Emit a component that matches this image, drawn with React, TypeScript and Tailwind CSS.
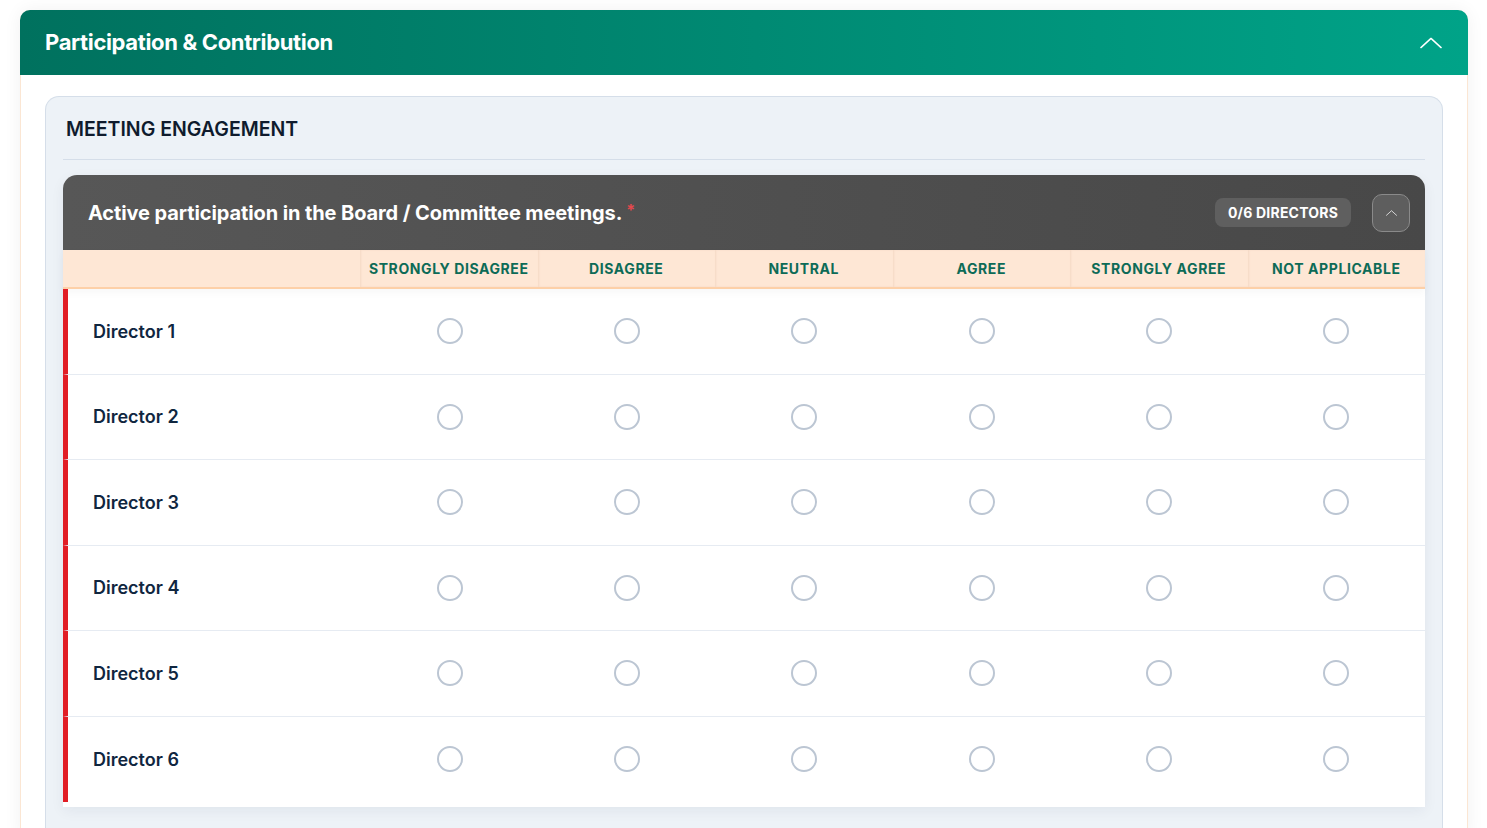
import React, { useState } from "react";

const OPTIONS = [
  "Strongly Disagree",
  "Disagree",
  "Neutral",
  "Agree",
  "Strongly Agree",
  "Not Applicable",
];

const DIRECTORS = [1, 2, 3, 4, 5, 6].map((n) => `Director ${n}`);

function ChevronUp({ className }: { className?: string }) {
  return (
    <svg viewBox="0 0 24 12" fill="none" className={className}>
      <path d="M1 11L12 1l11 10" stroke="currentColor" strokeWidth="1.6" strokeLinecap="round" strokeLinejoin="round" />
    </svg>
  );
}

function Radio({ checked, onClick }: { checked: boolean; onClick: () => void }) {
  return (
    <button
      onClick={onClick}
      className={`w-[26px] h-[26px] rounded-full border-[2.5px] flex items-center justify-center ${
        checked ? "border-[#0d6b57]" : "border-[#bcc6d3]"
      }`}
    >
      {checked && <span className="w-3 h-3 rounded-full bg-[#0d6b57]" />}
    </button>
  );
}

export default function App() {
  const [answers, setAnswers] = useState<Record<string, number>>({});
  const answered = Object.keys(answers).length;

  return (
    <div className="min-h-screen bg-white pt-[10px] pl-[20px] pr-[19px] font-['Inter',sans-serif]">
      <div className="rounded-t-[10px] border border-[#fbe6d3] shadow-[0_0_18px_rgba(0,0,0,0.06)] bg-white">
        {/* Section header */}
        <div className="h-[65px] -m-px rounded-t-[10px] bg-gradient-to-r from-[#00715e] to-[#00a388] flex items-center justify-between pl-[25px] pr-[26px]">
          <h2 className="text-white text-[22px] font-bold tracking-[-0.35px]">Participation &amp; Contribution</h2>
          <ChevronUp className="w-[22px] h-[12px] text-white" />
        </div>

        <div className="px-[24px] pt-[22px]">
          <div className="rounded-t-[14px] border border-b-0 border-[#d5dee9] bg-[#edf2f7] px-[17px] pb-[30px]">
            <div className="h-[63px] pt-[4px] flex items-center border-b border-[#d5dee9] pl-[3px]">
              <h3 className="text-[19.5px] font-semibold text-[#0f1b2d]">MEETING ENGAGEMENT</h3>
            </div>

            {/* Question card */}
            <div className="mt-[15px] rounded-t-[14px] bg-white shadow-[0_4px_14px_rgba(15,30,60,0.06)] pb-[5px]">
              <div className="h-[75px] rounded-t-[14px] bg-gradient-to-r from-[#575757] to-[#484848] flex items-center justify-between pl-[25px] pr-[15px]">
                <p className="text-white text-[20px] font-bold tracking-[-0.1px]">
                  Active participation in the Board / Committee meetings.
                  <span className="text-[#e5484d] text-[16px] align-top ml-[4px]">*</span>
                </p>
                <div className="flex items-center gap-[21px]">
                  <span className="h-[29px] px-[13px] rounded-[8px] bg-[#5f5f5f] text-white text-[14px] font-bold flex items-center tracking-[0.2px]">
                    {answered}/6 DIRECTORS
                  </span>
                  <button className="w-[38px] h-[38px] rounded-[10px] bg-[#5e5e5e] border border-[#8a8a8a] flex items-center justify-center">
                    <ChevronUp className="w-[11px] h-[6px] text-white" />
                  </button>
                </div>
              </div>

              {/* Column headers */}
              <div className="grid grid-cols-[297px_repeat(6,1fr)] h-[39px] bg-[#fee7d5] border-b-2 border-[#fdd0a8] shadow-[0_4px_8px_rgba(0,0,0,0.03)]">
                <div />
                {OPTIONS.map((o) => (
                  <div
                    key={o}
                    className="flex items-center justify-center text-[14px] font-bold uppercase tracking-[0.6px] text-[#0d6b57] shadow-[inset_1px_0_2px_rgba(220,180,150,0.25)]"
                  >
                    {o}
                  </div>
                ))}
              </div>

              {DIRECTORS.map((d, i) => (
                <div
                  key={d}
                  className={`grid grid-cols-[293px_repeat(6,1fr)] h-[85.5px] border-l-[5px] border-l-[#e11d25] ${
                    i < DIRECTORS.length - 1 ? "border-b border-b-[#e6ebf2]" : ""
                  }`}
                >
                  <div className="flex items-center pl-[25px] text-[18px] font-semibold text-[#10263f]">{d}</div>
                  {OPTIONS.map((o, j) => (
                    <div key={o} className="flex items-center justify-center">
                      <Radio
                        checked={answers[d] === j}
                        onClick={() => setAnswers({ ...answers, [d]: j })}
                      />
                    </div>
                  ))}
                </div>
              ))}
            </div>
          </div>
        </div>
      </div>
    </div>
  );
}
